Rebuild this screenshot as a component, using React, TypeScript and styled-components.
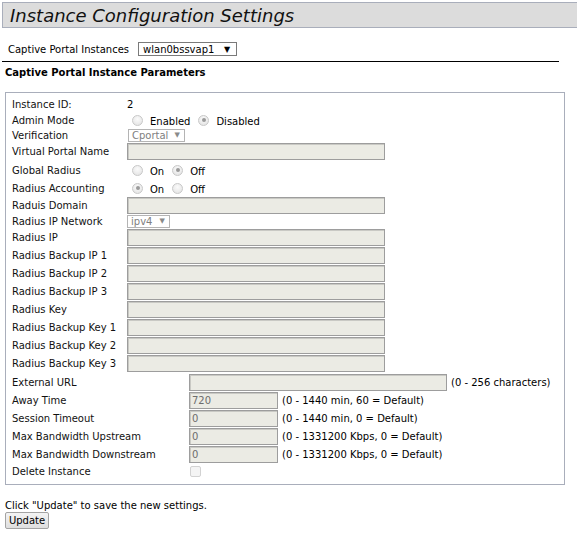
import React from 'react';
import styled, { createGlobalStyle } from 'styled-components';

const GlobalStyle = createGlobalStyle`
    body {
        margin: 0;
        background: #fff;
        font-family: 'DejaVu Sans', Verdana, sans-serif;
        font-size: 10px;
        color: #000;
    }
`;

const Page = styled.div`
    width: 577px;
    padding-top: 2px;
`;

const TitleBar = styled.div`
    margin-left: 2px;
    height: 24px;
    background: #dcdcdc;
    border: 1px solid #a9aebb;
    border-right: none;
    display: flex;
    align-items: center;
    padding-left: 7px;
    font-style: italic;
    font-size: 18px;
    color: #111;
`;

const PickerRow = styled.div`
    display: flex;
    align-items: center;
    margin-top: 14px;
    padding-left: 8px;
    height: 14px;
    gap: 9px;
`;

const Picker = styled.span<{ $w: number; $disabled?: boolean }>`
    display: inline-flex;
    align-items: center;
    justify-content: space-between;
    gap: 3px;
    box-sizing: border-box;
    width: ${(p) => p.$w}px;
    height: ${(p) => (p.$disabled ? 13 : 14)}px;
    padding: 0 ${(p) => (p.$disabled ? 4 : 6)}px 0 ${(p) => (p.$disabled ? 3 : 4)}px;
    border: 1px solid ${(p) => (p.$disabled ? '#b4b4b4' : '#7a7a7a')};
    background: #fff;
    color: ${(p) => (p.$disabled ? '#808080' : '#000')};
    font-size: 10px;
    white-space: nowrap;

    &::after {
        content: '▼';
        font-size: ${(p) => (p.$disabled ? 7 : 8)}px;
        color: ${(p) => (p.$disabled ? '#8a8a8a' : '#000')};
    }
`;

const Rule = styled.div`
    margin: 5px 18px 0 2px;
    height: 1px;
    background: #000;
`;

const SectionHeading = styled.div`
    margin: 5px 0 0 5px;
    font-weight: bold;
    height: 12px;
    line-height: 12px;
`;

const Box = styled.div`
    margin: 13px 0 0 5px;
    width: 552px;
    border: 1px solid #a9aebb;
    padding: 3px 0 5px 6px;
`;

const Row = styled.div<{ $label: number; $h: number }>`
    display: grid;
    grid-template-columns: ${(p) => p.$label}px auto 1fr;
    align-items: center;
    height: ${(p) => p.$h}px;
`;

const Label = styled.span`
    color: #111;
`;

const Field = styled.span<{ $w: number }>`
    display: inline-flex;
    align-items: center;
    box-sizing: border-box;
    width: ${(p) => p.$w}px;
    height: 17px;
    padding-left: 2px;
    border: 1px solid #9d9d9d;
    box-shadow: inset 1px 1px 0 #c9c9c4;
    background: #ebebe4;
    color: #6d6d6d;
`;

const Note = styled.span`
    margin-left: 4px;
    white-space: nowrap;
`;

const Choices = styled.span`
    display: inline-flex;
    align-items: center;
    padding-left: 5px;
`;

const Radio = styled.span<{ $on?: boolean }>`
    position: relative;
    box-sizing: border-box;
    width: 11px;
    height: 11px;
    border-radius: 50%;
    border: 1px solid #c8c8c8;
    background: radial-gradient(circle at 50% 35%, #fbfbfb, #e0e0e0);
    margin-right: 7px;

    &::after {
        content: '';
        display: ${(p) => (p.$on ? 'block' : 'none')};
        position: absolute;
        left: 2.5px;
        top: 2.5px;
        width: 4px;
        height: 4px;
        border-radius: 50%;
        background: #9a9a9a;
    }
`;

const ChoiceText = styled.span`
    margin-right: 8px;
    padding-top: 3px;
`;

const Check = styled.span`
    box-sizing: border-box;
    width: 11px;
    height: 11px;
    margin-left: 1px;
    border: 1px solid #d2d2d2;
    border-radius: 2px;
    background: #f4f4f4;
`;

const Hint = styled.div`
    margin: 14px 0 0 5px;
    height: 13px;
    line-height: 13px;
`;

const Button = styled.button`
    margin: 0 0 0 5px;
    box-sizing: border-box;
    width: 44px;
    height: 17px;
    padding: 0;
    border: 1px solid #a3a3a3;
    border-radius: 2px;
    background: linear-gradient(#f4f4f4, #dedede);
    font-family: inherit;
    font-size: 10px;
    color: #000;
`;

type Opt = { text: string; on?: boolean };

const RadioPair = ({ opts }: { opts: Opt[] }) => (
    <Choices>
        {opts.map((o) => (
            <React.Fragment key={o.text}>
                <Radio $on={o.on} />
                <ChoiceText>{o.text}</ChoiceText>
            </React.Fragment>
        ))}
    </Choices>
);

const radiusFields = [
    'Radius IP',
    'Radius Backup IP 1',
    'Radius Backup IP 2',
    'Radius Backup IP 3',
    'Radius Key',
    'Radius Backup Key 1',
    'Radius Backup Key 2',
    'Radius Backup Key 3',
];

const limits = [
    { label: 'Away Time', value: '720', note: '(0 - 1440 min, 60 = Default)' },
    { label: 'Session Timeout', value: '0', note: '(0 - 1440 min, 0 = Default)' },
    { label: 'Max Bandwidth Upstream', value: '0', note: '(0 - 1331200 Kbps, 0 = Default)' },
    { label: 'Max Bandwidth Downstream', value: '0', note: '(0 - 1331200 Kbps, 0 = Default)' },
];

const App = (): JSX.Element => {
    return (
        <Page>
            <GlobalStyle />
            <TitleBar>Instance Configuration Settings</TitleBar>
            <PickerRow>
                <span>Captive Portal Instances</span>
                <Picker $w={99}>wlan0bssvap1</Picker>
            </PickerRow>
            <Rule />
            <SectionHeading>Captive Portal Instance Parameters</SectionHeading>
            <Box>
                <Row $label={115} $h={16}>
                    <Label>Instance ID:</Label>
                    <span>2</span>
                </Row>
                <Row $label={115} $h={16}>
                    <Label>Admin Mode</Label>
                    <RadioPair opts={[{ text: 'Enabled' }, { text: 'Disabled', on: true }]} />
                </Row>
                <Row $label={116} $h={14}>
                    <Label>Verification</Label>
                    <Picker $w={57} $disabled>
                        Cportal
                    </Picker>
                </Row>
                <Row $label={115} $h={18}>
                    <Label>Virtual Portal Name</Label>
                    <Field $w={258} />
                </Row>
                <Row $label={115} $h={20}>
                    <Label>Global Radius</Label>
                    <RadioPair opts={[{ text: 'On' }, { text: 'Off', on: true }]} />
                </Row>
                <Row $label={115} $h={16}>
                    <Label>Radius Accounting</Label>
                    <RadioPair opts={[{ text: 'On', on: true }, { text: 'Off' }]} />
                </Row>
                <Row $label={115} $h={18}>
                    <Label>Raduis Domain</Label>
                    <Field $w={258} />
                </Row>
                <Row $label={115} $h={14}>
                    <Label>Radius IP Network</Label>
                    <Picker $w={43} $disabled>
                        ipv4
                    </Picker>
                </Row>
                {radiusFields.map((f) => (
                    <Row key={f} $label={115} $h={18}>
                        <Label>{f}</Label>
                        <Field $w={258} />
                    </Row>
                ))}
                <Row $label={177} $h={18} style={{ marginTop: 1 }}>
                    <Label>External URL</Label>
                    <Field $w={258} />
                    <Note>(0 - 256 characters)</Note>
                </Row>
                {limits.map((l) => (
                    <Row key={l.label} $label={177} $h={18}>
                        <Label>{l.label}</Label>
                        <Field $w={89}>{l.value}</Field>
                        <Note>{l.note}</Note>
                    </Row>
                ))}
                <Row $label={177} $h={16}>
                    <Label>Delete Instance</Label>
                    <Check />
                </Row>
            </Box>
            <Hint>Click "Update" to save the new settings.</Hint>
            <Button>Update</Button>
        </Page>
    );
};

export default App;
